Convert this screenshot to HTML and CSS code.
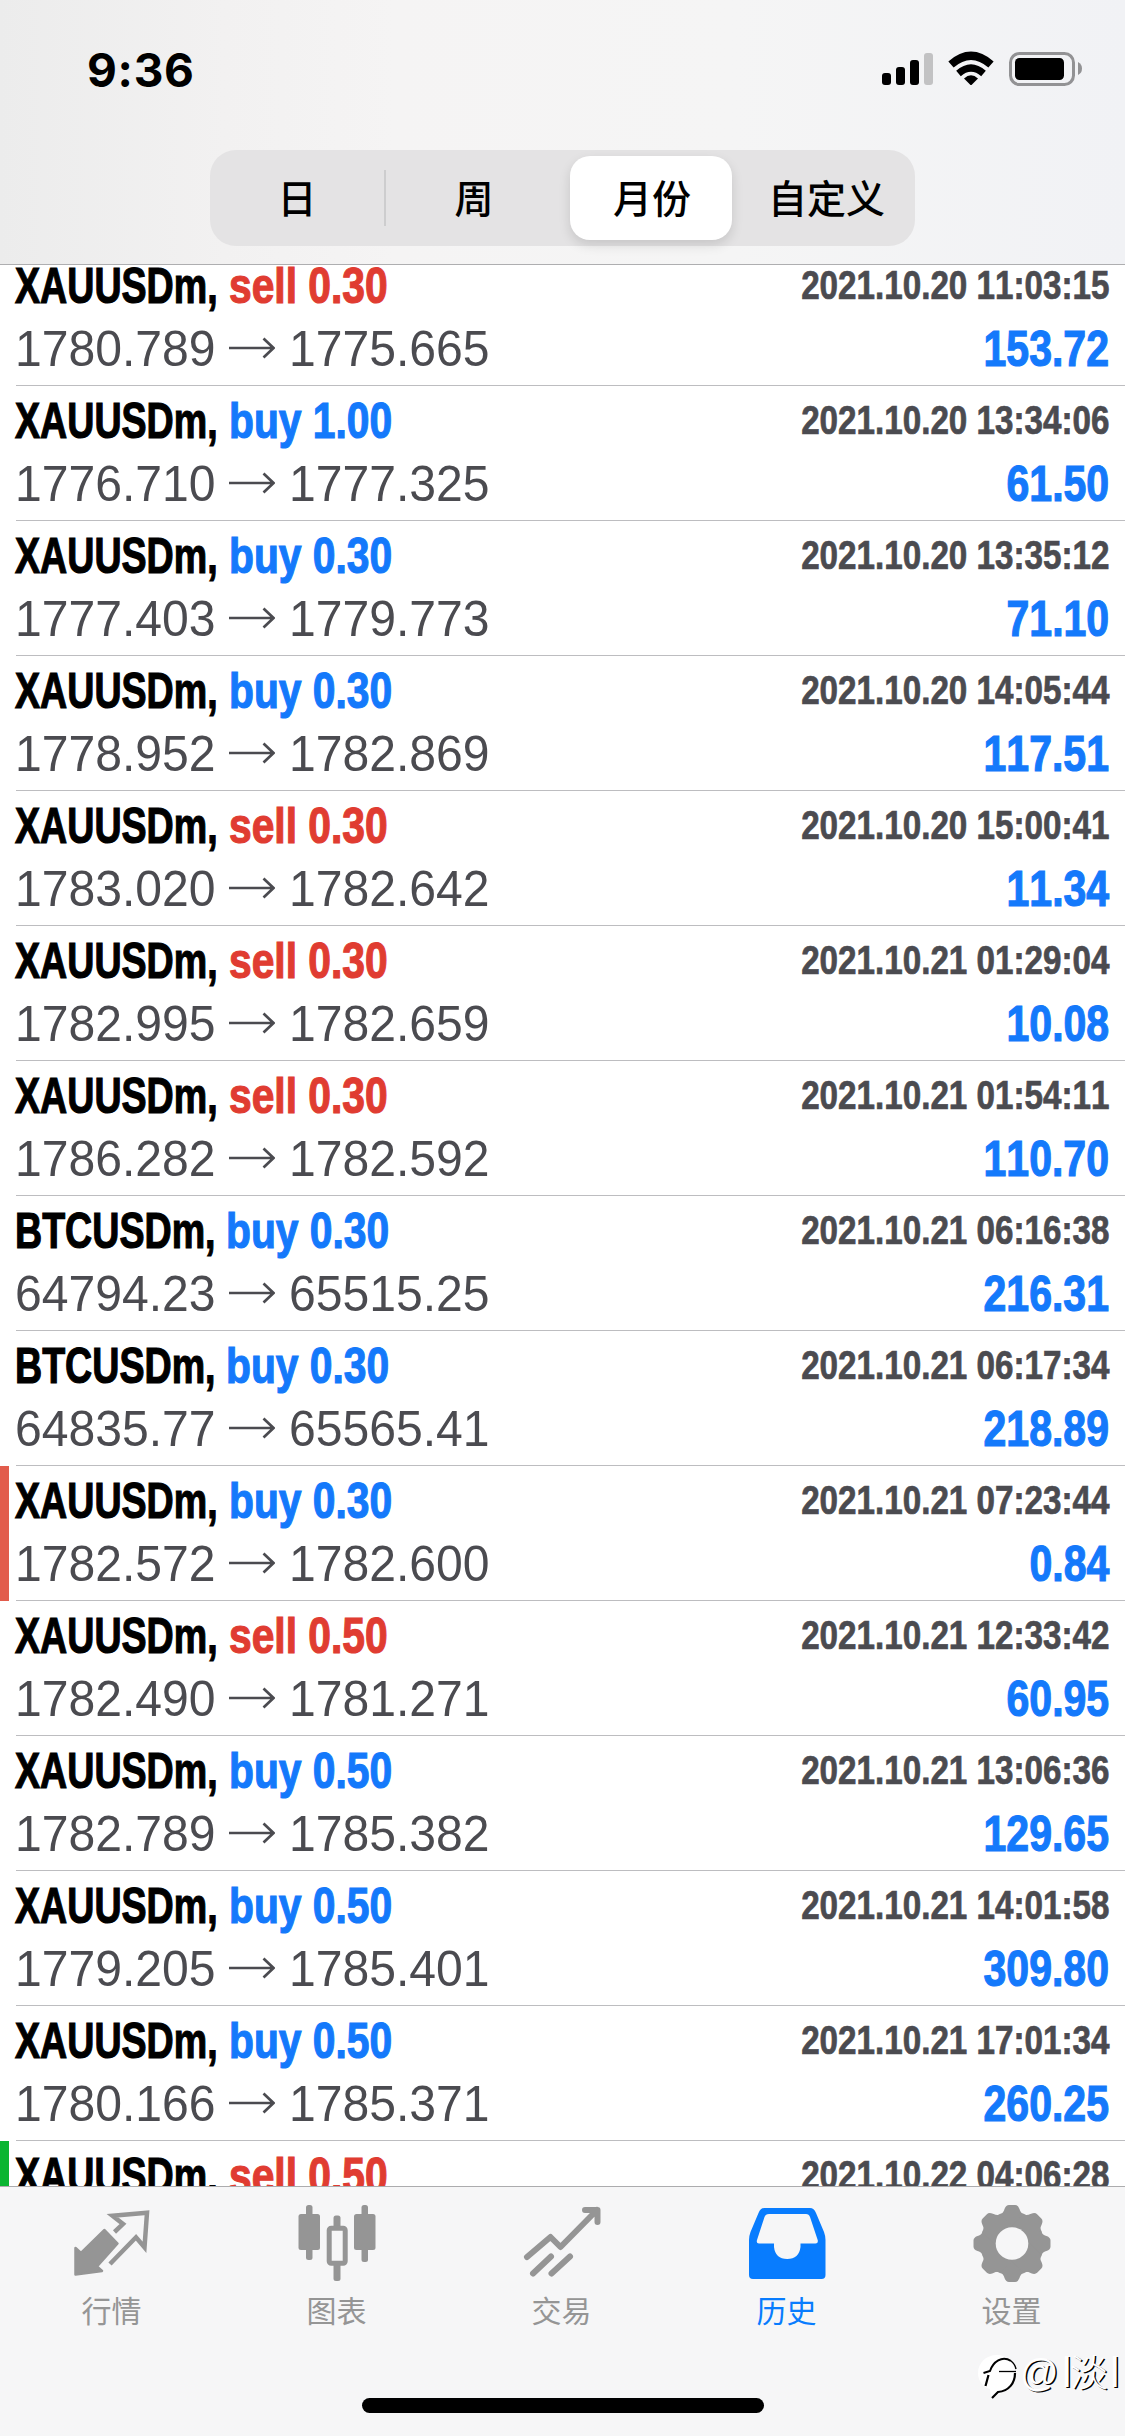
FILE: index.html
```
<!DOCTYPE html>
<html lang="zh-CN">
<head>
<meta charset="utf-8">
<title>历史</title>
<link rel="stylesheet" href="styles.css">
</head>
<body>
<svg class="defs" width="0" height="0"><defs>
<symbol id="arrow" viewBox="0 0 46 24"><path d="M0 12H44.500M34.500 2.500L44.500 12L34.500 21.500" fill="none" stroke="#4b4b50" stroke-width="2.700"/></symbol>
</defs></svg>
<div class="screen">
<header class="header">
  <div class="status">
    <span class="clock">9:36</span>
    <svg class="signals" width="205" height="40" viewBox="880 50 205 40">
      <rect x="882" y="73" width="9" height="12" rx="3"/><rect x="896" y="67" width="9" height="18" rx="3"/><rect x="910" y="60" width="9" height="25" rx="3"/><rect x="924" y="53" width="9" height="32" rx="3" fill="#c2c2c3"/>
      <path d="M951 64.500Q971 47 991 64.500" fill="none" stroke="#000" stroke-width="8"/>
      <path d="M958.500 73.500Q971 62.500 983.500 73.500" fill="none" stroke="#000" stroke-width="7"/>
      <path d="M964 78.500Q971 72 978 78.500L972 84.500Q971 85.500 970 84.500Z"/>
      <rect x="1010.500" y="53.500" width="63" height="31" rx="9" fill="none" stroke="#929294" stroke-width="3"/>
      <rect x="1015" y="58" width="49" height="22" rx="4.500"/>
      <path d="M1078 62Q1082 64 1082 68.500T1078 75Z" fill="#929294"/>
    </svg>
  </div>
  <nav class="segments">
    <span class="segment divided">日</span><span class="segment week">周</span><span class="segment selected">月份</span><span class="segment">自定义</span>
  </nav>
</header>
<main class="list">
  <div class="row"><div class="line"><span class="symbol">XAUUSDm,</span><span class="side sell">sell 0.30</span><span class="date">2021.10.20 11:03:15</span></div><div class="line"><span class="open">1780.789</span><svg class="arrow"><use href="#arrow"/></svg><span class="close">1775.665</span><span class="profit">153.72</span></div></div>
  <div class="row"><div class="line"><span class="symbol">XAUUSDm,</span><span class="side buy">buy 1.00</span><span class="date">2021.10.20 13:34:06</span></div><div class="line"><span class="open">1776.710</span><svg class="arrow"><use href="#arrow"/></svg><span class="close">1777.325</span><span class="profit">61.50</span></div></div>
  <div class="row"><div class="line"><span class="symbol">XAUUSDm,</span><span class="side buy">buy 0.30</span><span class="date">2021.10.20 13:35:12</span></div><div class="line"><span class="open">1777.403</span><svg class="arrow"><use href="#arrow"/></svg><span class="close">1779.773</span><span class="profit">71.10</span></div></div>
  <div class="row"><div class="line"><span class="symbol">XAUUSDm,</span><span class="side buy">buy 0.30</span><span class="date">2021.10.20 14:05:44</span></div><div class="line"><span class="open">1778.952</span><svg class="arrow"><use href="#arrow"/></svg><span class="close">1782.869</span><span class="profit">117.51</span></div></div>
  <div class="row"><div class="line"><span class="symbol">XAUUSDm,</span><span class="side sell">sell 0.30</span><span class="date">2021.10.20 15:00:41</span></div><div class="line"><span class="open">1783.020</span><svg class="arrow"><use href="#arrow"/></svg><span class="close">1782.642</span><span class="profit">11.34</span></div></div>
  <div class="row"><div class="line"><span class="symbol">XAUUSDm,</span><span class="side sell">sell 0.30</span><span class="date">2021.10.21 01:29:04</span></div><div class="line"><span class="open">1782.995</span><svg class="arrow"><use href="#arrow"/></svg><span class="close">1782.659</span><span class="profit">10.08</span></div></div>
  <div class="row"><div class="line"><span class="symbol">XAUUSDm,</span><span class="side sell">sell 0.30</span><span class="date">2021.10.21 01:54:11</span></div><div class="line"><span class="open">1786.282</span><svg class="arrow"><use href="#arrow"/></svg><span class="close">1782.592</span><span class="profit">110.70</span></div></div>
  <div class="row"><div class="line"><span class="symbol btc">BTCUSDm,</span><span class="side buy">buy 0.30</span><span class="date">2021.10.21 06:16:38</span></div><div class="line"><span class="open">64794.23</span><svg class="arrow"><use href="#arrow"/></svg><span class="close">65515.25</span><span class="profit">216.31</span></div></div>
  <div class="row"><div class="line"><span class="symbol btc">BTCUSDm,</span><span class="side buy">buy 0.30</span><span class="date">2021.10.21 06:17:34</span></div><div class="line"><span class="open">64835.77</span><svg class="arrow"><use href="#arrow"/></svg><span class="close">65565.41</span><span class="profit">218.89</span></div></div>
  <div class="row marked stop"><div class="line"><span class="symbol">XAUUSDm,</span><span class="side buy">buy 0.30</span><span class="date">2021.10.21 07:23:44</span></div><div class="line"><span class="open">1782.572</span><svg class="arrow"><use href="#arrow"/></svg><span class="close">1782.600</span><span class="profit">0.84</span></div></div>
  <div class="row"><div class="line"><span class="symbol">XAUUSDm,</span><span class="side sell">sell 0.50</span><span class="date">2021.10.21 12:33:42</span></div><div class="line"><span class="open">1782.490</span><svg class="arrow"><use href="#arrow"/></svg><span class="close">1781.271</span><span class="profit">60.95</span></div></div>
  <div class="row"><div class="line"><span class="symbol">XAUUSDm,</span><span class="side buy">buy 0.50</span><span class="date">2021.10.21 13:06:36</span></div><div class="line"><span class="open">1782.789</span><svg class="arrow"><use href="#arrow"/></svg><span class="close">1785.382</span><span class="profit">129.65</span></div></div>
  <div class="row"><div class="line"><span class="symbol">XAUUSDm,</span><span class="side buy">buy 0.50</span><span class="date">2021.10.21 14:01:58</span></div><div class="line"><span class="open">1779.205</span><svg class="arrow"><use href="#arrow"/></svg><span class="close">1785.401</span><span class="profit">309.80</span></div></div>
  <div class="row"><div class="line"><span class="symbol">XAUUSDm,</span><span class="side buy">buy 0.50</span><span class="date">2021.10.21 17:01:34</span></div><div class="line"><span class="open">1780.166</span><svg class="arrow"><use href="#arrow"/></svg><span class="close">1785.371</span><span class="profit">260.25</span></div></div>
  <div class="row marked take"><div class="line"><span class="symbol">XAUUSDm,</span><span class="side sell">sell 0.50</span><span class="date">2021.10.22 04:06:28</span></div></div>
</main>
<footer class="footer">
  <nav class="tabs">
    <a class="tab"><svg viewBox="0 0 90 90"><path d="M37.500 30L50.500 43.500L30 66.500L35 71L8.500 74.500L8.500 48L14 53Z" fill="currentColor" stroke="currentColor" stroke-width="2.500" stroke-linejoin="round"/><path d="M47.500 32L56 24L45.500 15.800L80 12.800L77.500 47.300L69 37.300L43 64" fill="none" stroke="currentColor" stroke-width="4.500"/></svg>行情</a>
    <a class="tab"><svg viewBox="0 0 90 90"><g fill="currentColor"><rect x="6.500" y="14" width="21.500" height="36" rx="2.500"/><rect x="14" y="5" width="6.500" height="55" rx="2.500"/><rect x="62" y="14" width="21.500" height="36" rx="2.500"/><rect x="69.500" y="5" width="6.500" height="57" rx="2.500"/><rect x="41.500" y="15.500" width="7" height="13" rx="2.500"/><rect x="41.500" y="62" width="7" height="19" rx="2.500"/></g><rect x="37.200" y="28.200" width="16" height="35" rx="2" fill="none" stroke="currentColor" stroke-width="5"/></svg>图表</a>
    <a class="tab"><svg viewBox="0 0 90 90"><g fill="none" stroke="currentColor" stroke-width="6" stroke-linecap="round" stroke-linejoin="round"><path d="M10 57L33.500 37L43.500 47L80 10M68 10H80.500V22"/><path d="M16 73.500L34 56.500M34.500 73.500L53 56.500"/></g></svg>交易</a>
    <a class="tab active"><svg viewBox="0 0 90 90"><path d="M22 8H68Q72 8 74 13L82 32Q83.500 36 83.500 40V75Q83.500 79 79.500 79H11Q7 79 7 75V40Q7 36 8.500 32L16.500 13Q18.500 8 22 8Z" fill="currentColor"/><path d="M27 14H64Q67 14 68 17L75.700 40Q76.500 43.500 73.500 43.500H58.500V47Q57 59 45.200 59T32 47V43.500H17Q14 43.500 15 40L22.500 17Q23.500 14 27 14Z" fill="#f6f6f7"/></svg>历史</a>
    <a class="tab"><svg viewBox="0 0 90 90"><g fill="currentColor"><circle cx="45" cy="43.500" r="32"/><path id="cog" d="M32.500 16Q37 12 37.500 9Q39 5 42 5H48Q51 5 52.500 9Q53 12 57.500 16V71Q53 75 52.500 78Q51 82 48 82H42Q39 82 37.500 78Q37 75 32.500 71Z"/><use href="#cog" transform="rotate(45 45 43.500)"/><use href="#cog" transform="rotate(90 45 43.500)"/><use href="#cog" transform="rotate(135 45 43.500)"/></g><circle cx="45" cy="43.500" r="16.300" fill="#f6f6f7"/></svg>设置</a>
  </nav>
  <div class="home"></div>
</footer>
<div class="watermark">
  <svg width="44" height="50" viewBox="0 0 44 50"><path d="M21 4C10 4 2 12 2 22C2 30 7 36 14 38L15 47C28 42 40 35 39 21C38 11 31 4 21 4Z" fill="#fff"/><path d="M7.500 22L14 20C17 11 26 4 35 10" fill="none" stroke="#000" stroke-width="2"/><path d="M39 22C39 32 33 40 22 41L16 47M12.500 24L9.500 35" fill="none" stroke="#000" stroke-width="2.200"/><path d="M23 20.500H40" stroke="#000" stroke-width="1.300"/><path d="M35 10Q39 13 40 18" fill="none" stroke="#000" stroke-width="1.500"/></svg>
  <span class="handle">@</span><span class="bar">l</span><span class="hanzi">淡</span><span class="bar">l</span>
</div>
</div>
</body>
</html>
```
FILE: styles.css
```
* { box-sizing: border-box; }
body { margin: 0; background: #fff; font-family: "Liberation Sans", "Noto Sans CJK SC", sans-serif; }
.defs { display: block; height: 0; }
.screen { position: relative; display: flex; flex-direction: column; width: 1125px; height: 2436px; overflow: hidden; }

.header { flex: none; height: 265px; border-bottom: 1px solid #aeaeb0; background: linear-gradient(90deg, #ececec 0, #f2f1f1 20%, #f5f4f4 35%, #f5f5f5 65%, #f1f2f5 100%); }
.status { display: flex; justify-content: space-between; height: 150px; padding: 50px 40px 0 87px; }
.clock { height: 40px; font: 700 46px/40px Inter, sans-serif; letter-spacing: 0.7px; }
.signals { display: block; }
.segments { display: grid; grid-template-columns: 176px 181px 171px 177px; width: 705px; height: 96px; margin-left: 210px; padding: 6px 0; border-radius: 26px; background: #e4e3e4; }
.segment { display: flex; align-items: center; justify-content: center; padding-bottom: 4px; font: 500 39px/60px "Noto Sans CJK SC", sans-serif; }
.week { padding-right: 5px; }
.divided { border-right: 2px solid #cfcfd0; border-image: linear-gradient(transparent 17%, #cdcdce 17%, #cdcdce 83%, transparent 83%) 1; }
.selected { width: 162px; margin-left: 3px; padding-left: 2px; border-radius: 20px; background: #fff; box-shadow: 0 5px 12px rgba(0, 0, 0, .13); }

.list { flex: none; height: 1921px; overflow: hidden; }
.row { height: 135px; padding: 4px 16px 0 15px; background: linear-gradient(#bdbdc0, #bdbdc0) 16px 134px / 1109px 1px no-repeat; }
.row:first-child { margin-top: -14px; }
.marked { border-left: 9px solid #e25c4c; padding-left: 6px; background-position: 7px 134px; }
.stop { border-image: linear-gradient(#e25c4c 134px, transparent 134px) 1; }
.take { border-left-color: #0ab531; }
.line { display: flex; align-items: flex-start; height: 63px; font-size: 50px; line-height: 62px; font-kerning: none; white-space: nowrap; }
.symbol, .side, .date, .profit { font-weight: 700; -webkit-text-stroke: 1.2px currentColor; }
.symbol { width: 214px; font-kerning: normal; transform: scaleX(.752); transform-origin: left; }
.btc { width: 211px; }
.side { width: 160px; transform: scaleX(.815); transform-origin: left; }
.sell { color: #e03c31; }
.buy { color: #1479fb; }
.date, .profit { margin-left: auto; transform-origin: right; }
.date { color: #4b4b50; font-size: 40px; line-height: 60px; transform: scaleX(.83); -webkit-text-stroke-width: .7px; }
.profit { color: #1479fb; transform: scaleX(.82); }
.open, .close { color: #4b4b50; transform: scaleX(.962); transform-origin: left; }
.open { width: 214px; }
.close { width: 200px; margin-left: 14px; }
.arrow { width: 46px; height: 24px; margin-top: 18px; }

.footer { flex: none; height: 250px; border-top: 1px solid #acacae; background: #f6f6f7; }
.tabs { display: flex; height: 211px; }
.tab { display: flex; flex: 1; flex-direction: column; align-items: center; padding: 13px 2px 0 0; color: #959595; font: 400 30px/39px "Noto Sans CJK SC", sans-serif; }
.tab svg { width: 90px; height: 90px; }
.active { color: #087cfe; }
.home { width: 402px; height: 15px; margin: 0 auto; border-radius: 8px; background: #000; }

.watermark { position: absolute; left: 976px; top: 2351px; display: flex; height: 50px; color: #fff; font-size: 38px; line-height: 44px; text-shadow: 1.5px 1px 0 #000; }
.handle { width: 42px; }
.bar { width: 8px; font-size: 42px; }
.hanzi { width: 40px; font: 300 38px/38px "Noto Sans CJK SC", sans-serif; }
```
